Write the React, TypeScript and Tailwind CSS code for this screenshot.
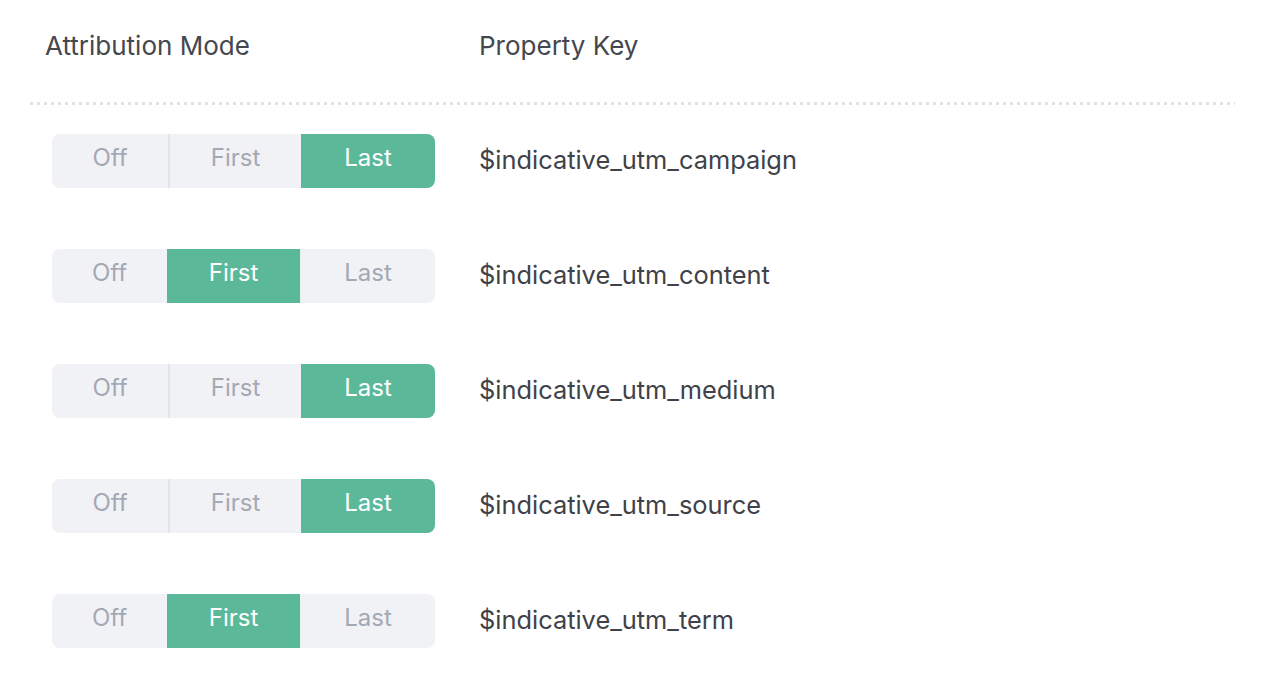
import React from 'react';

type Mode = 'Off' | 'First' | 'Last';

const rows: { key: string; mode: Mode }[] = [
    { key: '$indicative_utm_campaign', mode: 'Last' },
    { key: '$indicative_utm_content', mode: 'First' },
    { key: '$indicative_utm_medium', mode: 'Last' },
    { key: '$indicative_utm_source', mode: 'Last' },
    { key: '$indicative_utm_term', mode: 'First' },
];

const ModeToggle: React.FC<{ value: Mode }> = ({ value }) => {
    const seg = (label: Mode, width: string, extra: string) => {
        const active = label === value;
        return (
            <div
                className={`${width} h-full flex items-center justify-center ${extra} ${
                    active ? 'bg-[#5bb99a] text-white' : 'text-[#a4a8b3]'
                }`}
            >
                <span className="-mt-[6px]">{label}</span>
            </div>
        );
    };

    const lastOn = value === 'Last';

    return (
        <div className="flex h-[54px] w-[383px] rounded-[8px] bg-[#f1f2f6] overflow-hidden text-[24px] leading-[30px]">
            {seg('Off', lastOn ? 'w-[118px]' : 'w-[115px]', lastOn ? 'border-r-2 border-[#e2e4e9]' : '')}
            {seg('First', lastOn ? 'w-[131px]' : 'w-[134px]', value === 'First' ? 'border-r border-[#e6f3ee]' : '')}
            {seg('Last', 'flex-1', '')}
        </div>
    );
};

export default function App() {
    return (
        <div
            className="min-h-[700px] bg-white pl-[30px] pt-[31px]"
            style={{ fontFamily: 'Inter, "Noto Sans", sans-serif' }}
        >
            <div className="w-[1205px]">
                <div className="grid grid-cols-[449px_1fr] text-[26px] leading-[30px] text-[#45474e]">
                    <div className="pl-[15px]">Attribution Mode</div>
                    <div>Property Key</div>
                </div>
                <div className="mt-[41px] h-[3px] bg-[linear-gradient(to_right,#dfe2e8_3px,transparent_3px)] bg-[length:7px_3px]" />
                <div className="mt-[29px] flex flex-col gap-[61px]">
                    {rows.map((r) => (
                        <div key={r.key} className="grid grid-cols-[449px_1fr] items-center">
                            <div className="pl-[22px]">
                                <ModeToggle value={r.mode} />
                            </div>
                            <div className="text-[25.4px] leading-[30px] text-[#404249] -mt-[2px]">{r.key}</div>
                        </div>
                    ))}
                </div>
            </div>
        </div>
    );
}
